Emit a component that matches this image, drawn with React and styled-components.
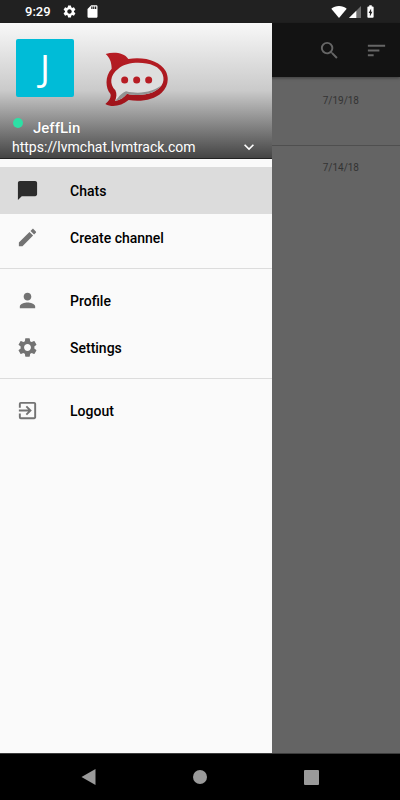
import React from "react";
import styled, { createGlobalStyle } from "styled-components";
import {
  MdSettings,
  MdSdCard,
  MdChatBubble,
  MdPerson,
  MdExitToApp,
  MdSearch,
  MdSort,
  MdKeyboardArrowDown,
  MdBatteryChargingFull,
} from "react-icons/md";

const GlobalStyle = createGlobalStyle`
  * { box-sizing: border-box; }
  body {
    margin: 0;
    background: #000;
    font-family: Roboto, "Noto Sans", sans-serif;
  }
  button {
    padding: 0;
    border: 0;
    background: none;
    color: inherit;
    font: inherit;
    cursor: pointer;
  }
  svg { display: block; flex: none; }
`;

const Screen = styled.div`
  display: flex;
  flex-direction: column;
  min-height: 100vh;
`;

const StatusBar = styled.header`
  display: flex;
  align-items: center;
  justify-content: space-between;
  height: 23px;
  padding: 0 22px 0 25px;
  background: #212121;
  color: #fff;
`;

const StatusGroup = styled.div`
  display: flex;
  align-items: center;
  gap: ${(p) => p.$gap}px;
`;

const Clock = styled.time`
  margin-right: 3px;
  font-size: 13px;
  font-weight: 500;
  line-height: 23px;
`;

const Body = styled.div`
  position: relative;
  flex: 1;
  display: flex;
  border-bottom: 1px solid #3c3c3c;
`;

const ChatScreen = styled.main`
  flex: 1;
  background: #646464;
`;

const Toolbar = styled.div`
  display: flex;
  justify-content: flex-end;
  align-items: center;
  gap: 24px;
  height: 54px;
  padding-right: 12px;
  background: #131313;
  color: #666;
  box-shadow: 0 1px 3px rgba(0, 0, 0, 0.4);
`;

const ChatList = styled.ul`
  margin: 0;
  padding: 0;
  list-style: none;
`;

const ChatRow = styled.li`
  display: flex;
  justify-content: flex-end;
  height: ${(p) => (p.$first ? 69 : 68)}px;
  padding: ${(p) => (p.$first ? 17 : 15)}px 41px 0 0;
  border-bottom: ${(p) => (p.$first ? "1px solid #4f4f4f" : "0")};
  color: #333;
  font-size: 10px;
  line-height: 13px;
`;

const Drawer = styled.aside`
  position: absolute;
  inset: 0 auto 0 0;
  width: 68%;
  background: #fafafa;
`;

const Account = styled.section`
  height: 136px;
  padding: 16px 13px 0 12px;
  border-bottom: 1px solid #222;
  background: linear-gradient(#f8f8f8 0%, #cacaca 50%, #444 100%);
  color: #fff;
`;

const Brand = styled.div`
  display: flex;
  align-items: flex-end;
  gap: 31px;
  height: 68px;
  padding-left: 4px;
`;

const Avatar = styled.div`
  align-self: flex-start;
  width: 58px;
  height: 58px;
  border-radius: 2px;
  background: #00bcd7;
  text-align: center;
  font-family: "Open Sans", sans-serif;
  font-size: 37px;
  line-height: 56px;
`;

const NameRow = styled.div`
  display: flex;
  align-items: flex-start;
  gap: 10px;
  margin-top: 11px;
  padding-left: 1px;
  font-size: 15px;
  font-weight: 500;
  line-height: 20px;
`;

const Presence = styled.span`
  width: 10px;
  height: 10px;
  border-radius: 50%;
  background: #2de0a5;
`;

const Name = styled.span`
  text-shadow: 0 0 1px rgba(0, 0, 0, 0.3);
`;

const ServerButton = styled.button`
  display: flex;
  justify-content: space-between;
  align-items: center;
  width: 100%;
  height: 18px;
  font-size: 14px;
  line-height: 18px;
`;

const MenuGroup = styled.div`
  padding: 8px 0 7px;
  border-bottom: ${(p) => (p.$last ? "0" : "1px solid #dcdcdc")};
`;

const MenuButton = styled.button`
  display: flex;
  align-items: center;
  gap: 31px;
  width: 100%;
  height: 47px;
  padding: 0 16px;
  background: ${(p) => (p.$active ? "#dcdcdc" : "transparent")};
  color: #000;
  font-size: 14px;
  font-weight: 500;
  text-align: left;

  svg {
    color: ${(p) => (p.$active ? "#2c2c2c" : "#737373")};
  }
`;

const SystemNav = styled.nav`
  display: flex;
  justify-content: space-around;
  align-items: center;
  height: 46px;
  padding: 0 33px;
  background: #000;
  color: #9a9a9a;
`;

const WifiIcon = () => (
  <svg width="16" height="12" viewBox="0 0 16 12" fill="currentColor" aria-hidden="true">
    <path d="M8 12 0.3 2.8C2.5 1 5 0 8 0s5.500 1 7.700 2.800Z" />
  </svg>
);

const SignalIcon = () => (
  <svg width="12" height="12" viewBox="0 0 12 12" fill="currentColor" aria-hidden="true">
    <path d="M0 12 12 0V12Z" opacity="0.35" />
    <path d="M0 12 7.300 4.700V12Z" />
  </svg>
);

const PencilIcon = ({ size }) => (
  <svg width={size} height={size} viewBox="0 0 24 24" fill="currentColor" aria-hidden="true">
    <path d="M3 17.250V21h3.750L17.810 9.940l-3.750-3.750L3 17.250zM20.710 7.040c.39-.39.39-1.020 0-1.410l-2.340-2.340c-.39-.39-1.020-.39-1.410 0l-1.830 1.830 3.750 3.750 1.830-1.830z" />
  </svg>
);

const RocketLogo = () => (
  <svg width="63" height="55" viewBox="44 38 189 165" role="img" aria-label="Rocket.Chat">
    <defs>
      <linearGradient id="rocketRed" x1="0" y1="0" x2="0" y2="1">
        <stop offset="0" stopColor="#b71d24" />
        <stop offset="1" stopColor="#a0141b" />
      </linearGradient>
    </defs>
    <path
      fill="url(#rocketRed)"
      d="M46 44C70 37 101 40 114 59C163 51 210 66 226 95C238 118 232 144 214 160C191 181 153 188 115 182C94 199 66 206 45 194C56 185 64 173 60 163C45 147 43 110 64 88C64 67 57 54 46 44Z"
    />
    <path
      fill="#dedede"
      d="M84 88C107 68 157 65 191 79C217 90 227 118 214 138C197 163 153 174 110 163C101 174 90 182 74 185C79 175 80 163 75 153C57 134 58 108 84 88Z"
    />
    <path
      fill="#929292"
      d="M214 138C197 163 153 174 110 163C101 174 90 182 74 185C83 177 89 164 107 156C153 167 190 155 214 138Z"
    />
    <g fill="#b71d24">
      <circle cx="103" cy="122" r="10.500" />
      <circle cx="139" cy="122" r="10.500" />
      <circle cx="175" cy="122" r="10.500" />
    </g>
  </svg>
);

const MENU = [
  [
    { label: "Chats", Icon: MdChatBubble, active: true },
    { label: "Create channel", Icon: PencilIcon },
  ],
  [
    { label: "Profile", Icon: MdPerson },
    { label: "Settings", Icon: MdSettings },
  ],
  [{ label: "Logout", Icon: MdExitToApp }],
];

const CHAT_DATES = ["7/19/18", "7/14/18"];

export default function App() {
  return (
    <Screen>
      <GlobalStyle />
      <StatusBar>
        <StatusGroup $gap={8}>
          <Clock>9:29</Clock>
          <MdSettings size={15} />
          <MdSdCard size={15} />
        </StatusGroup>
        <StatusGroup $gap={2}>
          <WifiIcon />
          <SignalIcon />
          <MdBatteryChargingFull size={15} />
        </StatusGroup>
      </StatusBar>

      <Body>
        <ChatScreen>
          <Toolbar>
            <button type="button" aria-label="Search">
              <MdSearch size={23} />
            </button>
            <button type="button" aria-label="Sort">
              <MdSort size={23} />
            </button>
          </Toolbar>
          <ChatList>
            {CHAT_DATES.map((date, i) => (
              <ChatRow key={date} $first={i === 0}>
                <time>{date}</time>
              </ChatRow>
            ))}
          </ChatList>
        </ChatScreen>

        <Drawer>
          <Account>
            <Brand>
              <Avatar>J</Avatar>
              <RocketLogo />
            </Brand>
            <NameRow>
              <Presence />
              <Name>JeffLin</Name>
            </NameRow>
            <ServerButton type="button">
              <span>https://lvmchat.lvmtrack.com</span>
              <MdKeyboardArrowDown size={20} />
            </ServerButton>
          </Account>
          <nav aria-label="Main menu">
            {MENU.map((group, i) => (
              <MenuGroup key={group[0].label} $last={i === MENU.length - 1}>
                {group.map(({ label, Icon, active }) => (
                  <MenuButton key={label} type="button" $active={active}>
                    <Icon size={23} />
                    {label}
                  </MenuButton>
                ))}
              </MenuGroup>
            ))}
          </nav>
        </Drawer>
      </Body>

      <SystemNav aria-label="System">
        <button type="button" aria-label="Back">
          <svg width="15" height="16" viewBox="0 0 15 16" fill="currentColor">
            <path d="M0.500 8 14.500 0V16Z" />
          </svg>
        </button>
        <button type="button" aria-label="Home">
          <svg width="14" height="14" viewBox="0 0 14 14" fill="currentColor">
            <circle cx="7" cy="7" r="7" />
          </svg>
        </button>
        <button type="button" aria-label="Recent apps">
          <svg width="15" height="15" viewBox="0 0 15 15" fill="currentColor">
            <rect width="15" height="15" rx="1" />
          </svg>
        </button>
      </SystemNav>
    </Screen>
  );
}
